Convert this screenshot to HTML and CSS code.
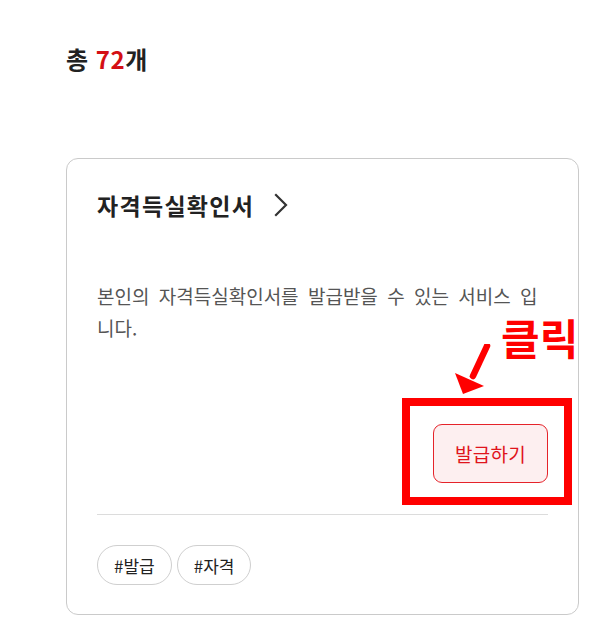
FILE: index.html
```html
<!DOCTYPE html>
<html lang="ko">
<head>
<meta charset="utf-8">
<title>자격득실확인서</title>
<link rel="stylesheet" href="styles.css">
</head>
<body>
<main class="page">
  <p class="total">총 <strong class="count">72</strong>개</p>
  <section class="card">
    <h2 class="card-title">
      <span>자격득실확인서</span>
      <svg class="chevron" width="14" height="24" viewBox="0 0 14 24" aria-hidden="true"><path d="M2 2 L12 12 L2 22" fill="none" stroke="#333" stroke-width="2.2" stroke-linecap="square"/></svg>
    </h2>
    <p class="card-desc">본인의 자격득실확인서를 발급받을 수 있는 서비스 입니다.</p>
    <div class="card-actions">
      <button class="issue-btn" type="button">발급하기</button>
    </div>
    <hr class="divider">
    <ul class="tags">
      <li class="tag">#발급</li>
      <li class="tag">#자격</li>
    </ul>
    <div class="annot-box"></div>
    <span class="annot-label">클릭</span>
    <svg class="annot-arrow" width="44" height="60" viewBox="0 0 44 60" aria-hidden="true">
      <line x1="36" y1="2" x2="22" y2="32" stroke="#ff0000" stroke-width="6.5" stroke-linecap="round"/>
      <polygon points="4,29 12,50 33,42" fill="#ff0000"/>
    </svg>
  </section>
</main>
</body>
</html>
```
FILE: styles.css
```css
* { box-sizing: border-box; }
html, body { margin: 0; padding: 0; background: #fff; }
body {
  font-family: "Noto Sans CJK KR", "Noto Sans", sans-serif;
  color: #222;
}
.page {
  padding: 43px 0 0 66px;
}
.total {
  margin: 0;
  font-size: 24px;
  line-height: 32px;
  letter-spacing: 0.5px;
  font-weight: 700;
  color: #222;
}
.count {
  color: #d40f14;
  font-weight: 700;
}
.card {
  position: relative;
  margin-top: 83px;
  width: 513px;
  border: 1px solid #cacaca;
  border-radius: 12px;
  padding: 31px 30px 29px 30px;
}
.card-title {
  margin: 0;
  display: flex;
  align-items: center;
  gap: 20px;
  font-size: 23px;
  line-height: 30px;
  letter-spacing: 1.3px;
  font-weight: 700;
  color: #222;
}
.chevron { display: block; }
.card-desc {
  margin: 60px 0 0 0;
  font-size: 19px;
  line-height: 32px;
  word-spacing: 4px;
  color: #555;
}
.card-actions {
  margin-top: 80px;
  display: flex;
  justify-content: flex-end;
}
.issue-btn {
  width: 115px;
  height: 59px;
  border: 1px solid #e5232a;
  border-radius: 9px;
  background: #fdeff0;
  color: #e0141c;
  font-family: inherit;
  font-size: 19px;
  letter-spacing: 0.3px;
  padding: 0;
}
.divider {
  margin: 31px 0 0 0;
  border: 0;
  border-top: 1px solid #dcdcdc;
  height: 0;
}
.tags {
  list-style: none;
  margin: 30px 0 0 0;
  padding: 0;
  display: flex;
  gap: 5px;
}
.tag {
  height: 40px;
  padding: 0 16px;
  border: 1px solid #cfcfcf;
  border-radius: 20px;
  display: flex;
  align-items: center;
  font-size: 17px;
  color: #222;
}
.annot-box {
  position: absolute;
  left: 335px;
  top: 239px;
  width: 170px;
  height: 107px;
  border: 8px solid #ff0000;
}
.annot-label {
  position: absolute;
  left: 434px;
  top: 157px;
  font-size: 42px;
  line-height: 42px;
  font-weight: 700;
  white-space: nowrap;
  color: #ff0000;
}
.annot-arrow {
  position: absolute;
  left: 384px;
  top: 185px;
}
```
